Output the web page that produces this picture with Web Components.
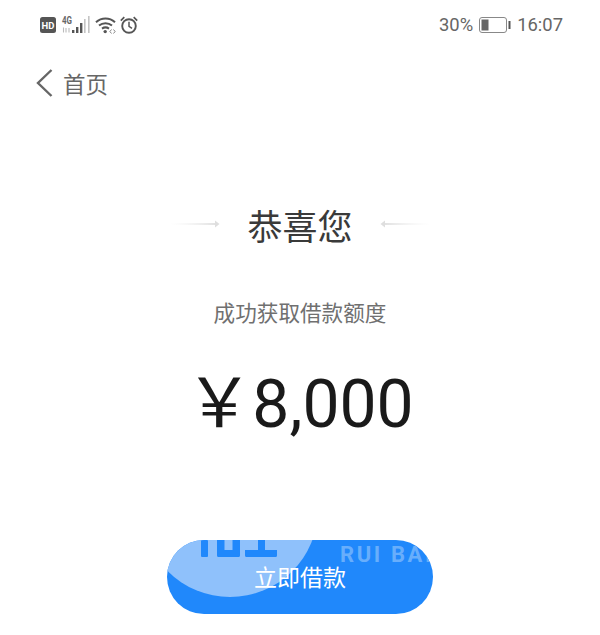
<!DOCTYPE html>
<html>
<head>
<meta charset="utf-8">
<style>
  html, body { margin: 0; background: #fff; }
  body { width: 600px; height: 635px; overflow: hidden; font-family: Roboto, "Noto Sans CJK SC", sans-serif; }
</style>
</head>
<body>
<status-bar></status-bar>
<nav-back>首页</nav-back>
<result-title>恭喜您</result-title>
<credit-amount label="成功获取借款额度" value="8,000"></credit-amount>
<loan-button>立即借款</loan-button>

<script>
// top bar with the phone's indicators
class StatusBar extends HTMLElement {
  constructor() {
    super();
    this.attachShadow({ mode: "open" });
    this.shadowRoot.innerHTML = `
      <style>
        :host { display: flex; justify-content: space-between; align-items: center; height: 48px; padding: 2px 37px 0 40px; box-sizing: border-box; color: #666; }
        .left, .right { display: flex; align-items: center; }
        .left { gap: 5px; margin-top: -1px; }
        .right { font: 18.4px/1 Roboto, sans-serif; gap: 6px; }
        svg { display: block; }
        .clock { margin-left: -1px; }
        .wifi { margin-left: -1px; }
      </style>
      <div class="left">
        <svg width="16" height="16" viewBox="0 0 16 16"><rect width="16" height="16" rx="2.5" fill="#555"/><text x="8" y="11.6" font-family="Roboto" font-weight="700" font-size="9.5" fill="#fff" text-anchor="middle">HD</text></svg>
        <svg width="30" height="20" viewBox="0 0 30 20">
          <text x="1" y="9" font-family="Roboto" font-weight="700" font-size="10.5" fill="#666" textLength="10" lengthAdjust="spacingAndGlyphs">4G</text>
          <path d="M2.5 12.5v5M5 13v4.500M8 13v4.500" stroke="#bbb" stroke-width="1.100"/>
          <rect x="11" y="15" width="2.4" height="3" fill="#555"/>
          <rect x="15" y="12" width="2.4" height="6" fill="#555"/>
          <rect x="19" y="8" width="2.4" height="10" fill="#555"/>
          <rect x="23" y="4" width="1.6" height="14" fill="#c4c4c4"/>
          <rect x="27" y="1" width="1.6" height="17" fill="#c4c4c4"/>
        </svg>
        <svg class="wifi" width="21" height="18" viewBox="0 0 21 18" fill="none" stroke="#555" stroke-width="2">
          <path d="M1 6.200C6.500 1.200 14.500 1.200 20 6.200"/>
          <path d="M4 9.600C7.800 6.400 13.200 6.400 17 9.600"/>
          <path d="M7 12.600C9 11.200 12 11.200 14 12.600"/>
          <circle cx="10.200" cy="15.600" r="1.700" fill="#555" stroke="none"/>
          <path d="M16.500 13.500l-1.600 2 1.600 2M18.500 13.500l1.600 2-1.600 2" stroke-width=".9" stroke="#777"/>
        </svg>
        <svg class="clock" width="18" height="18" viewBox="0 0 18 18" fill="none" stroke="#555" stroke-width="1.900">
          <circle cx="9" cy="10" r="6.800"/>
          <path d="M9 5.800v4.600l3 2" stroke-width="1.500"/>
          <path d="M.8 4.600L4.300 1.200M17.200 4.600L13.700 1.200" stroke-width="1.700"/>
        </svg>
      </div>
      <div class="right">
        <span>30%</span>
        <svg width="32" height="16" viewBox="0 0 32 16">
          <rect x=".5" y=".5" width="27" height="15" rx="2.5" fill="#fff" stroke="#888"/>
          <rect x="2.500" y="2.500" width="7" height="11" fill="#666"/>
          <rect x="29.500" y="4" width="2" height="8" fill="#555"/>
        </svg>
        <span>16:07</span>
      </div>`;
  }
}

class NavBack extends HTMLElement {
  constructor() {
    super();
    this.attachShadow({ mode: "open" });
    this.shadowRoot.innerHTML = `
      <style>
        :host { display: flex; align-items: center; gap: 10px; height: 70px; padding-left: 36px; color: #666; font: 22.500px/1 "Noto Sans CJK SC", sans-serif; }
        svg { display: block; }
      </style>
      <svg width="17" height="28" viewBox="0 0 17 28" fill="none" stroke="#666" stroke-width="2.400"><path d="M15.500 1L2 14l13.500 13"/></svg>
      <slot></slot>`;
  }
}

class ResultTitle extends HTMLElement {
  constructor() {
    super();
    this.attachShadow({ mode: "open" });
    this.shadowRoot.innerHTML = `
      <style>
        :host { display: flex; justify-content: center; align-items: center; gap: 27px; margin-top: 78px; height: 56px; color: #3a3a3a; font: 35px/1 "Noto Sans CJK SC", sans-serif; }
        svg { display: block; }
      </style>
      <svg width="50" height="8" viewBox="0 0 50 8"><defs><linearGradient id="l"><stop offset="0" stop-color="#eee" stop-opacity="0"/><stop offset="1" stop-color="#d8d8d8"/></linearGradient></defs><rect y="3.200" width="46" height="1.600" fill="url(#l)"/><path d="M45 .5l4.500 3.500L45 7.500z" fill="#dedede"/></svg>
      <slot></slot>
      <svg width="50" height="8" viewBox="0 0 50 8"><defs><linearGradient id="r"><stop offset="0" stop-color="#d8d8d8"/><stop offset="1" stop-color="#eee" stop-opacity="0"/></linearGradient></defs><rect x="4" y="3.200" width="46" height="1.600" fill="url(#r)"/><path d="M5 .5L.5 4 5 7.500z" fill="#dedede"/></svg>`;
  }
}

class CreditAmount extends HTMLElement {
  constructor() {
    super();
    this.attachShadow({ mode: "open" });
    this.shadowRoot.innerHTML = `
      <style>
        :host { display: flex; flex-direction: column; align-items: center; margin-top: 44px; }
        .label { height: 32px; line-height: 32px; font-size: 21.600px; color: #707070; font-family: "Noto Sans CJK SC", sans-serif; }
        .value { display: flex; align-items: center; gap: 0; margin: 44px 0 0 4px; height: 66px; color: #1a1a1a; font: 66px/1 Roboto, sans-serif; }
        .yen { font-family: "Noto Sans CJK SC", sans-serif; font-size: 68px; margin: 0 -1px 14px -5px; }
      </style>
      <div class="label"></div>
      <div class="value"><span class="yen">￥</span><span class="num"></span></div>`;
  }
  connectedCallback() {
    this.shadowRoot.querySelector(".label").textContent = this.getAttribute("label");
    this.shadowRoot.querySelector(".num").textContent = this.getAttribute("value");
  }
}

class LoanButton extends HTMLElement {
  constructor() {
    super();
    this.attachShadow({ mode: "open" });
    this.shadowRoot.innerHTML = `
      <style>
        :host { display: block; width: 266px; height: 74px; margin: 102px auto 0; }
        .btn { position: relative; overflow: hidden; display: flex; justify-content: center; align-items: center; box-sizing: border-box; padding-bottom: 1px; height: 100%; border-radius: 37px; background: #2088fb; color: #fff; font: 23px/1 "Noto Sans CJK SC", sans-serif; }
        .btn span { position: relative; }
        .circle { position: absolute; left: -25px; top: -119px; width: 176px; height: 176px; border-radius: 50%; background: #8fc1fb; }
        .logo { position: absolute; left: 34px; top: 0; }
        .mark { position: absolute; left: 173px; top: 4px; color: #68aefb; font: 700 22px/1 Roboto, sans-serif; letter-spacing: 2.600px; white-space: nowrap; }
      </style>
      <div class="btn">
        <div class="circle"></div>
        <svg class="logo" width="78" height="18" viewBox="0 0 78 18" fill="#2088fb">
          <rect width="7" height="17" rx="1"/>
          <path d="M16 0h7.500v10h8V0H39v15.500q0 1.500-1.500 1.500h-20q-1.500 0-1.500-1.500z"/>
          <path d="M44 10h13V0h7v10h12v5.500q0 1.500-1.500 1.500h-29q-1.500 0-1.500-1.500z"/>
        </svg>
        <div class="mark">RUI BAI</div>
        <span><slot></slot></span>
      </div>`;
  }
}

customElements.define("status-bar", StatusBar);
customElements.define("nav-back", NavBack);
customElements.define("result-title", ResultTitle);
customElements.define("credit-amount", CreditAmount);
customElements.define("loan-button", LoanButton);
</script>
</body>
</html>
